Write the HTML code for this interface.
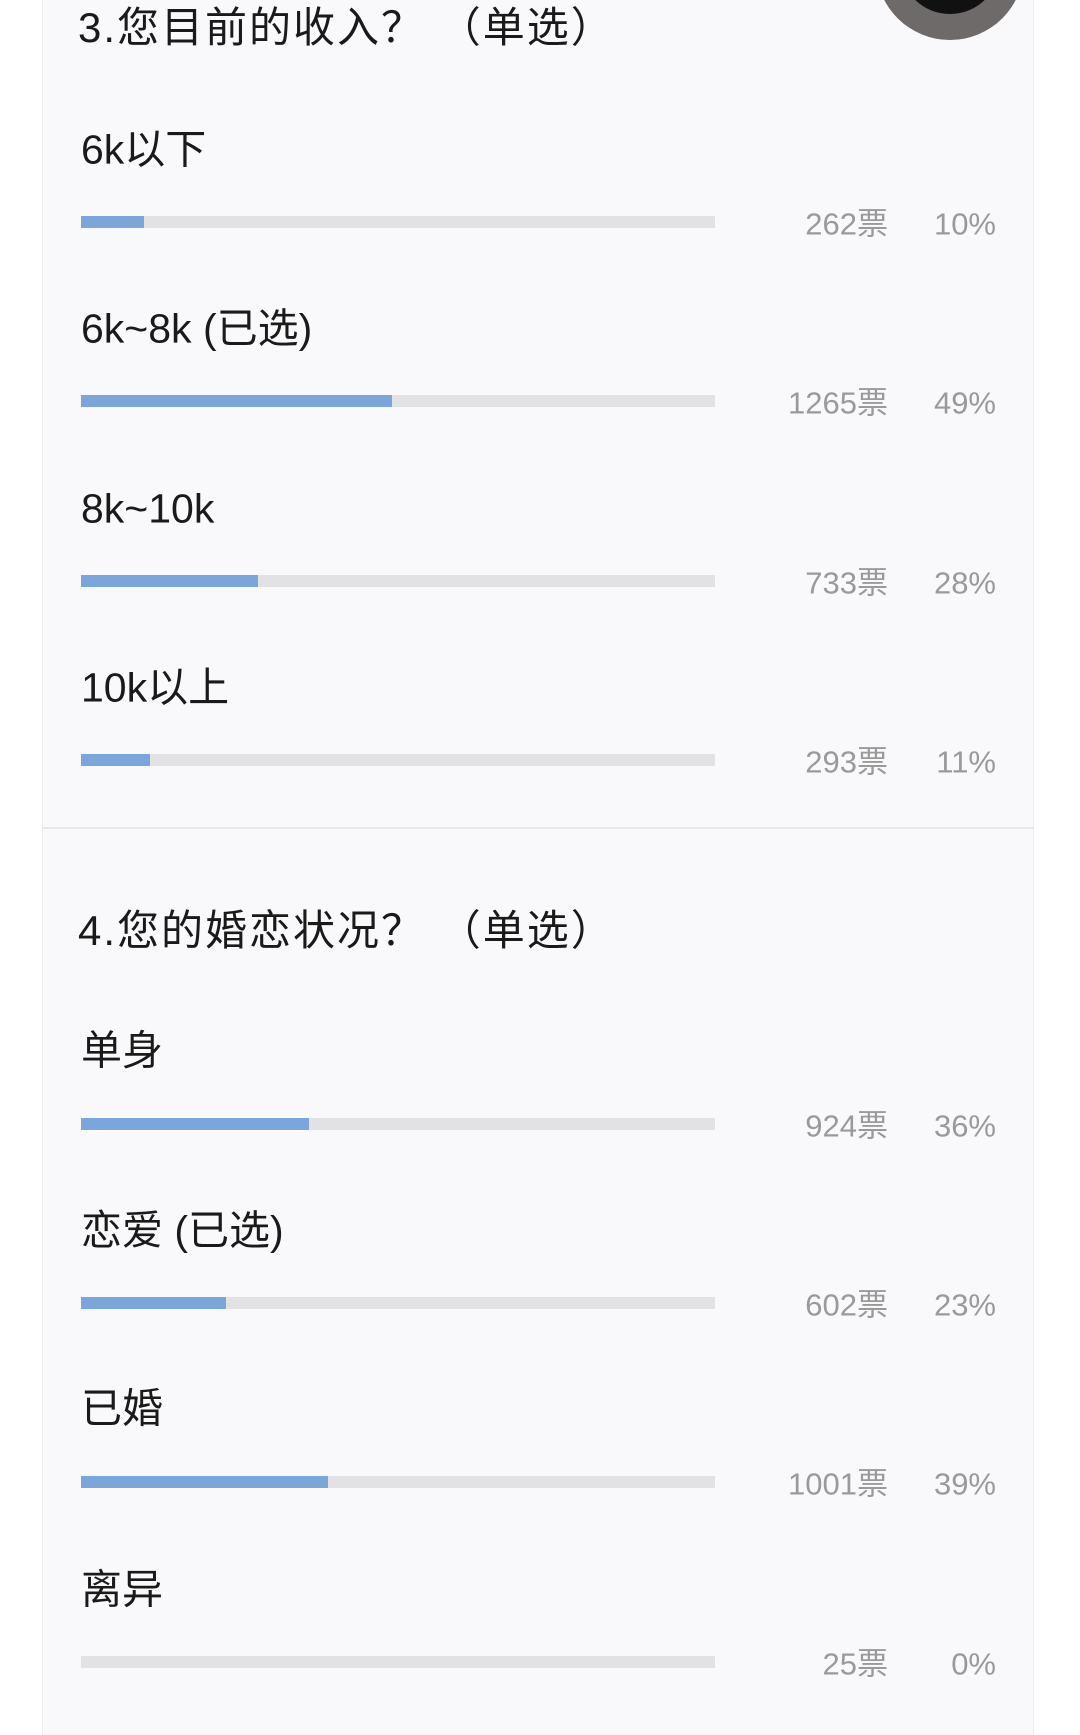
<!DOCTYPE html>
<html><head><meta charset="utf-8"><style>
body{margin:0;width:1080px;height:1735px;background:#fff;position:relative;overflow:hidden;font-family:"Liberation Sans","Noto Sans CJK SC",sans-serif}
.card{position:absolute;left:42px;width:990px;background:#f9f9fb;border-left:1px solid #eee;border-right:1px solid #eee}
.t{position:absolute;left:78px;font-size:42px;letter-spacing:2px;color:#1a1a1a;line-height:1;transform:translateY(-50%);white-space:nowrap}
.l{position:absolute;left:81px;font-size:41px;color:#1a1a1a;line-height:1;transform:translateY(-50%);white-space:nowrap}
.bar{position:absolute;left:81px;width:634px;height:12px;background:#e2e2e4;transform:translateY(-50%)}
.bar i{display:block;height:100%;background:#7aa6dc}
.v{position:absolute;right:192px;font-size:31px;color:#9a9a9a;transform:translateY(-50%);line-height:1}
.p{position:absolute;right:84px;font-size:31px;color:#9a9a9a;transform:translateY(-50%);line-height:1}
</style></head><body>
<div class="card" style="top:0;height:827px"></div>
<div style="position:absolute;left:42px;top:827px;width:992px;height:2px;background:#e8e8ea"></div>
<div class="card" style="top:829px;height:906px"></div>
<div style="position:absolute;left:876px;top:-108px;width:148px;height:148px;border-radius:50%;background:#6e6a6a"></div>
<div style="position:absolute;left:900px;top:-86px;width:100px;height:100px;border-radius:50%;background:#111"></div>

<div class="t" style="top:28px">3.您目前的收入？&nbsp;（单选）</div>
<div class="l" style="top:150px">6k以下</div>
<div class="bar" style="top:222px"><i style="width:63px"></i></div><div class="v" style="top:224px">262票</div><div class="p" style="top:224px">10%</div>
<div class="l" style="top:329px">6k~8k (已选)</div>
<div class="bar" style="top:401px"><i style="width:311px"></i></div><div class="v" style="top:403px">1265票</div><div class="p" style="top:403px">49%</div>
<div class="l" style="top:509px">8k~10k</div>
<div class="bar" style="top:581px"><i style="width:177px"></i></div><div class="v" style="top:583px">733票</div><div class="p" style="top:583px">28%</div>
<div class="l" style="top:688px">10k以上</div>
<div class="bar" style="top:760px"><i style="width:69px"></i></div><div class="v" style="top:762px">293票</div><div class="p" style="top:762px">11%</div>

<div class="t" style="top:931px">4.您的婚恋状况？&nbsp;（单选）</div>
<div class="l" style="top:1051px">单身</div>
<div class="bar" style="top:1124px"><i style="width:228px"></i></div><div class="v" style="top:1126px">924票</div><div class="p" style="top:1126px">36%</div>
<div class="l" style="top:1231px">恋爱 (已选)</div>
<div class="bar" style="top:1303px"><i style="width:145px"></i></div><div class="v" style="top:1305px">602票</div><div class="p" style="top:1305px">23%</div>
<div class="l" style="top:1409px">已婚</div>
<div class="bar" style="top:1482px"><i style="width:247px"></i></div><div class="v" style="top:1484px">1001票</div><div class="p" style="top:1484px">39%</div>
<div class="l" style="top:1590px">离异</div>
<div class="bar" style="top:1662px"><i style="width:0"></i></div><div class="v" style="top:1664px">25票</div><div class="p" style="top:1664px">0%</div>
</body></html>
